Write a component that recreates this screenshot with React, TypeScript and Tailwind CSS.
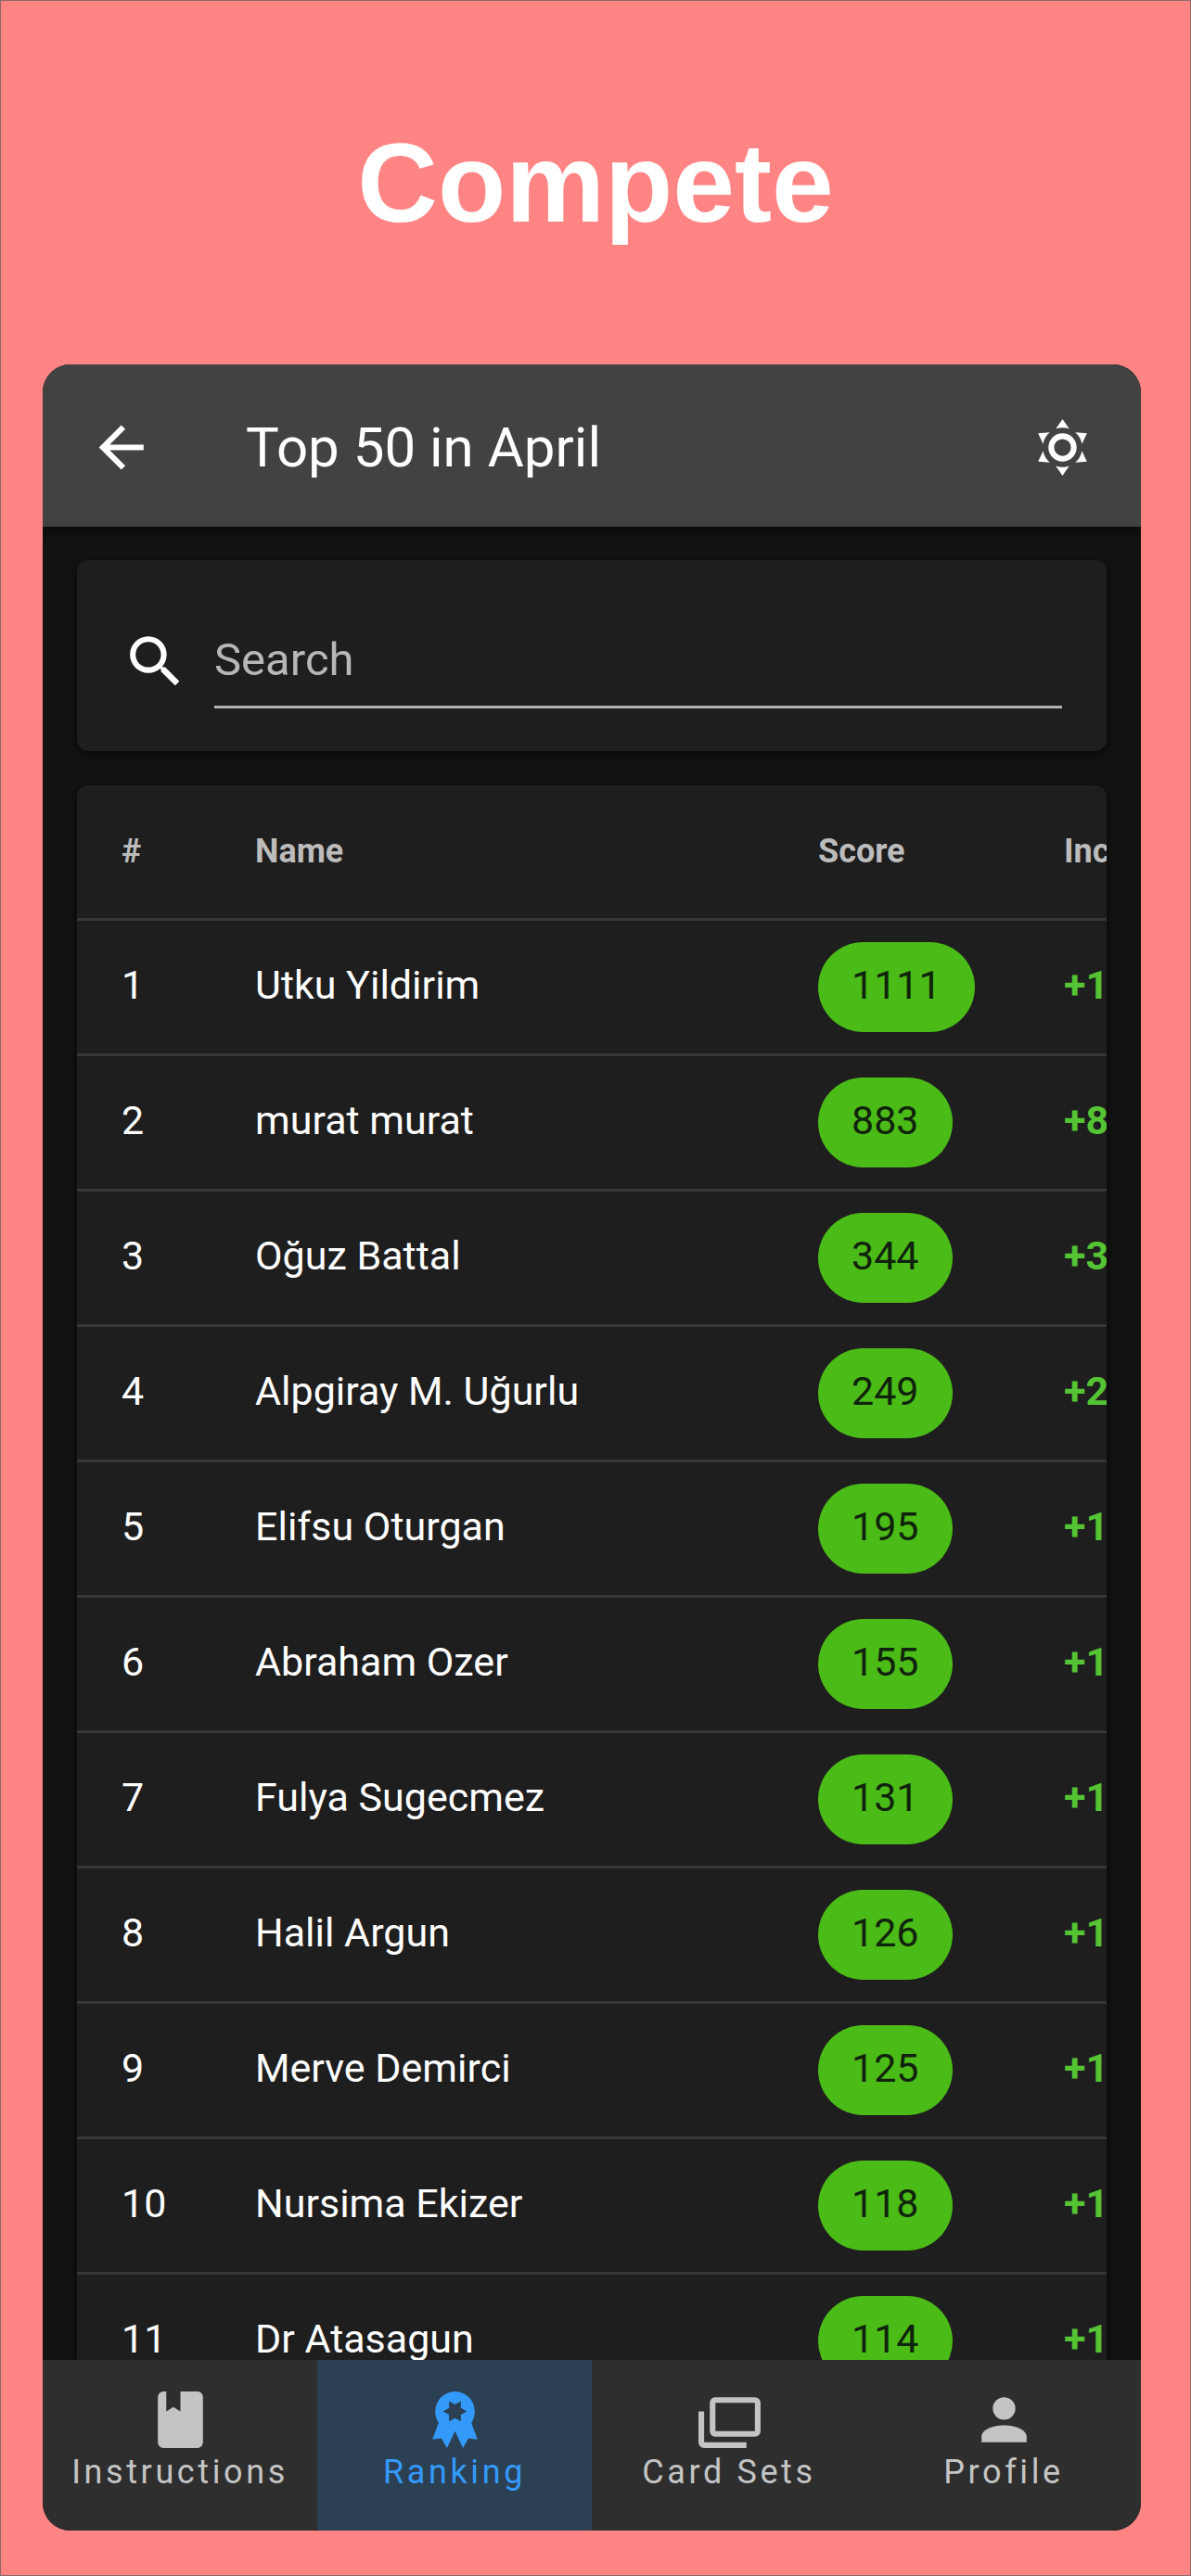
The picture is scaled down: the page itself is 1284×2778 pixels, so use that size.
import React, { useState } from "react";

interface IPlayer {
  rank: number;
  name: string;
  score: number;
  increase: string;
}

const players: IPlayer[] = [
  { rank: 1, name: "Utku Yildirim", score: 1111, increase: "+1111" },
  { rank: 2, name: "murat murat", score: 883, increase: "+883" },
  { rank: 3, name: "Oğuz Battal", score: 344, increase: "+344" },
  { rank: 4, name: "Alpgiray M. Uğurlu", score: 249, increase: "+249" },
  { rank: 5, name: "Elifsu Oturgan", score: 195, increase: "+195" },
  { rank: 6, name: "Abraham Ozer", score: 155, increase: "+155" },
  { rank: 7, name: "Fulya Sugecmez", score: 131, increase: "+131" },
  { rank: 8, name: "Halil Argun", score: 126, increase: "+126" },
  { rank: 9, name: "Merve Demirci", score: 125, increase: "+125" },
  { rank: 10, name: "Nursima Ekizer", score: 118, increase: "+118" },
  { rank: 11, name: "Dr Atasagun", score: 114, increase: "+114" },
];

const icons = {
  arrowLeft: "M20,11V13H8L13.5,18.5L12.08,19.92L4.16,12L12.08,4.08L13.5,5.5L8,11H20Z",
  sun: "M12,7A5,5 0 0,1 17,12A5,5 0 0,1 12,17A5,5 0 0,1 7,12A5,5 0 0,1 12,7M12,9A3,3 0 0,0 9,12A3,3 0 0,0 12,15A3,3 0 0,0 15,12A3,3 0 0,0 12,9M12,2L14.39,5.42C13.65,5.15 12.84,5 12,5C11.16,5 10.35,5.15 9.61,5.42L12,2M3.34,7L7.5,6.65C6.9,7.16 6.36,7.78 5.94,8.5C5.5,9.24 5.25,10 5.11,10.79L3.34,7M3.36,17L5.12,13.23C5.26,14 5.53,14.78 5.95,15.5C6.37,16.24 6.91,16.86 7.5,17.37L3.36,17M20.65,7L18.88,10.79C18.74,10 18.47,9.23 18.05,8.5C17.63,7.78 17.1,7.15 16.5,6.64L20.65,7M20.64,17L16.5,17.36C17.09,16.85 17.62,16.22 18.04,15.5C18.46,14.77 18.73,14 18.87,13.21L20.64,17M12,22L9.59,18.56C10.33,18.83 11.14,19 12,19C12.82,19 13.63,18.83 14.37,18.56L12,22Z",
  search: "M9.5,3A6.5,6.5 0 0,1 16,9.5C16,11.11 15.41,12.59 14.44,13.73L14.71,14H15.5L20.5,19L19,20.5L14,15.5V14.71L13.73,14.44C12.59,15.41 11.11,16 9.5,16A6.5,6.5 0 0,1 3,9.5A6.5,6.5 0 0,1 9.5,3M9.5,5C7,5 5,7 5,9.5C5,12 7,14 9.5,14C12,14 14,12 14,9.5C14,7 12,5 9.5,5Z",
  book: "M18,22A2,2 0 0,0 20,20V4C20,2.89 19.1,2 18,2H12V9L9.5,7.5L7,9V2H6A2,2 0 0,0 4,4V20A2,2 0 0,0 6,22H18Z",
  award: "M12,2A7,7 0 0,1 19,9C19,10.5 18.6,11.9 17.8,13.1L20,19L16.8,18.6L14.8,22L12,16L9.2,22L7.2,18.6L4,19L6.2,13.1C5.4,11.9 5,10.5 5,9A7,7 0 0,1 12,2M16.2,9L14.1,7.8L14.1,5.4L12,6.6L9.9,5.4L9.9,7.8L7.8,9L9.9,10.2L9.9,12.6L12,11.4L14.1,12.6L14.1,10.2Z",
  cards: "M21,16V6H7V16H21M21,4A2,2 0 0,1 23,6V16A2,2 0 0,1 21,18H7C5.89,18 5,17.1 5,16V6C5,4.89 5.89,4 7,4H21M3,20H18V22H3A2,2 0 0,1 1,20V9H3V20Z",
  account: "M12,4A4,4 0 0,1 16,8A4,4 0 0,1 12,12A4,4 0 0,1 8,8A4,4 0 0,1 12,4M12,14C16.42,14 20,15.79 20,18V20H4V18C4,15.79 7.58,14 12,14Z",
};

const Icon: React.FC<{ path: string }> = ({ path }) => (
  <svg viewBox="0 0 24 24" className="size-[73px] shrink-0 fill-current" fillRule="evenodd" aria-hidden="true">
    <path d={path} />
  </svg>
);

const tabs = [
  { label: "Instructions", icon: icons.book },
  { label: "Ranking", icon: icons.award },
  { label: "Card Sets", icon: icons.cards },
  { label: "Profile", icon: icons.account },
];

const App: React.FC = () => {
  const [search, setSearch] = useState<string>("");
  const [tab, setTab] = useState<string>("Ranking");

  const rows = players.filter((p) => p.name.toLowerCase().includes(search.toLowerCase()));

  return (
    <div className="flex h-screen flex-col border border-[#8a6a6a] bg-[#ff8585] font-[Roboto,sans-serif] text-white">
      <h1 className="pt-[128px] text-center font-['Liberation_Sans',Arial,sans-serif] text-[120px] leading-[136px] font-bold">
        Compete
      </h1>
      <div className="mt-32 mr-[53px] mb-12 ml-[45px] flex min-h-0 flex-1 flex-col overflow-hidden rounded-[30px] bg-[#121212]">
        <header className="z-10 flex h-[175px] shrink-0 items-center bg-[#424242] px-12 pt-1 shadow-[0_4px_12px_rgba(0,0,0,0.6)]">
          <button type="button" aria-label="Back">
            <Icon path={icons.arrowLeft} />
          </button>
          <h2 className="ml-[98px] flex-1 text-[60px] leading-[72px]">Top 50 in April</h2>
          <button type="button" aria-label="Toggle theme">
            <Icon path={icons.sun} />
          </button>
        </header>

        <main className="flex min-h-0 flex-1 flex-col gap-[37px] overflow-hidden px-[37px] pt-[36px]">
          <label className="flex h-[206px] shrink-0 items-center rounded-xl bg-[#1e1e1e] pt-3 pr-12 pl-[48px] shadow-[0_3px_10px_rgba(0,0,0,0.6)]">
            <Icon path={icons.search} />
            <input
              type="text"
              aria-label="Search"
              placeholder="Search"
              value={search}
              onChange={(e) => setSearch(e.target.value)}
              className="ml-[27px] h-[102px] min-w-0 flex-1 border-b-3 border-[#b4b4b4] text-[49px] outline-none placeholder:text-[#b7b7b7]"
            />
          </label>

          <div className="min-h-0 flex-1 overflow-hidden rounded-t-xl bg-[#1e1e1e] shadow-[0_3px_10px_rgba(0,0,0,0.6)]">
            <table className="w-[1400px] table-fixed border-collapse text-left text-[43px]">
              <thead>
                <tr className="h-[144px] border-b-3 border-[#373737] text-[36px] text-[#bcbcbc]">
                  <th className="w-[144px] pl-[48px] font-bold">#</th>
                  <th className="w-[607px] pl-[48px] font-bold">Name</th>
                  <th className="w-[265px] pl-[48px] font-bold">Score</th>
                  <th className="pl-[48px] font-bold">Increase</th>
                </tr>
              </thead>
              <tbody>
                {rows.map((p) => (
                  <tr key={p.rank} className="h-[146px] border-b-3 border-[#373737] leading-[60px]">
                    <td className="pb-1 pl-[48px]">{p.rank}</td>
                    <td className="pb-1 pl-[48px]">{p.name}</td>
                    <td className="pl-[48px]">
                      <span className="flex h-[97px] w-fit items-center rounded-full bg-[#4bbb17] px-9 pb-1 text-[#10230c]">
                        {p.score}
                      </span>
                    </td>
                    <td className="pb-1 pl-[48px] font-bold text-[#55c334]">{p.increase}</td>
                  </tr>
                ))}
              </tbody>
            </table>
          </div>
        </main>

        <nav className="z-10 grid h-[184px] shrink-0 grid-cols-4 bg-[#2e2e2e]">
          {tabs.map((t) => (
            <button
              key={t.label}
              type="button"
              onClick={() => setTab(t.label)}
              className={`flex flex-col items-center justify-center pb-4 text-[36px] leading-[40px] tracking-widest ${
                tab === t.label ? "bg-[#2c4053] text-[#3399fa]" : "text-[#c4c4c4]"
              }`}
            >
              <Icon path={t.icon} />
              {t.label}
            </button>
          ))}
        </nav>
      </div>
    </div>
  );
};

export default App;
